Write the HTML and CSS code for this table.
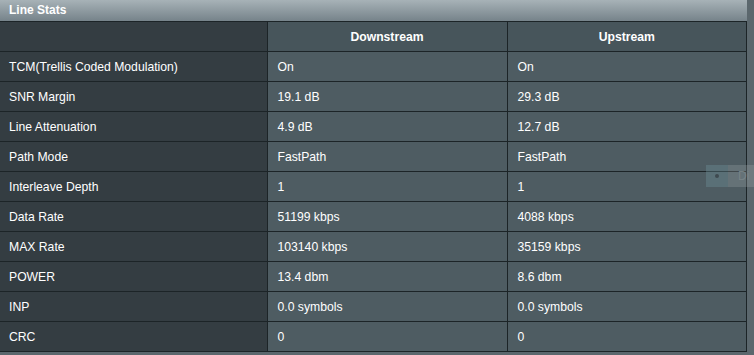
FILE: index.html
```html
<!DOCTYPE html>
<html>
<head>
<meta charset="utf-8">
<link rel="stylesheet" href="styles.css">
</head>
<body>
<div class="page">
  <div class="panel">
    <div class="title">Line Stats</div>
    <table class="stats">
      <colgroup>
        <col class="c1">
        <col class="c2">
        <col class="c3">
      </colgroup>
      <thead>
        <tr><th class="label"></th><th>Downstream</th><th>Upstream</th></tr>
      </thead>
      <tbody>
        <tr><td class="label">TCM(Trellis Coded Modulation)</td><td>On</td><td>On</td></tr>
        <tr><td class="label">SNR Margin</td><td>19.1 dB</td><td>29.3 dB</td></tr>
        <tr><td class="label">Line Attenuation</td><td>4.9 dB</td><td>12.7 dB</td></tr>
        <tr><td class="label">Path Mode</td><td>FastPath</td><td>FastPath</td></tr>
        <tr><td class="label">Interleave Depth</td><td>1</td><td>1</td></tr>
        <tr><td class="label">Data Rate</td><td>51199 kbps</td><td>4088 kbps</td></tr>
        <tr><td class="label">MAX Rate</td><td>103140 kbps</td><td>35159 kbps</td></tr>
        <tr><td class="label">POWER</td><td>13.4 dbm</td><td>8.6 dbm</td></tr>
        <tr><td class="label">INP</td><td>0.0 symbols</td><td>0.0 symbols</td></tr>
        <tr><td class="label">CRC</td><td>0</td><td>0</td></tr>
      </tbody>
    </table>
  </div>
  <div class="ghost"><span class="ghost-dot"><span class="dot"></span></span><span class="ghost-text">Di</span></div>
</div>
</body>
</html>
```
FILE: styles.css
```css
html, body {
  margin: 0;
  padding: 0;
}
body {
  width: 754px;
  height: 355px;
  overflow: hidden;
  background: #56636a;
  font-family: "Liberation Sans", Arial, sans-serif;
  font-size: 12px;
  color: #ffffff;
}
.page {
  position: relative;
  width: 754px;
  height: 355px;
  background: #5b676d;
}
.panel {
  width: 747px;
  background: #4e5b61;
}
.title {
  height: 21px;
  line-height: 21px;
  padding-left: 9px;
  font-weight: bold;
  color: #ffffff;
  background: linear-gradient(#a7b2b7, #76838a);
  box-sizing: border-box;
}
.stats {
  width: 747px;
  border-collapse: collapse;
  table-layout: fixed;
}
.stats .c1 { width: 267px; }
.stats .c2 { width: 240px; }
.stats th, .stats td {
  height: 29px;
  padding: 0 0 0 10px;
  border: 1px solid #1c2427;
  text-align: left;
  font-weight: normal;
  background: #4e5c62;
  color: #ffffff;
  white-space: nowrap;
  font-size: 12.2px;
}
.stats th {
  font-weight: bold;
  text-align: center;
  padding: 0;
  background: #47555b;
}
.stats .label {
  padding-left: 9px;
  border-left: none;
  background: #343d42;
  text-align: left;
  font-weight: normal;
}
.stats th.label {
  background: #343d42;
}
.ghost {
  position: absolute;
  left: 706px;
  top: 165px;
  width: 48px;
  height: 22px;
  display: flex;
  align-items: stretch;
}
.ghost-dot {
  width: 22px;
  display: flex;
  align-items: center;
  justify-content: center;
  background: rgba(120, 160, 170, 0.3);
}
.dot {
  width: 4px;
  height: 4px;
  border-radius: 50%;
  background: #3e4a50;
}
.ghost-text {
  flex: 1;
  display: flex;
  align-items: center;
  padding-left: 10px;
  background: rgba(170, 180, 182, 0.25);
  color: rgba(120, 132, 136, 0.95);
  font-size: 12px;
}
```
